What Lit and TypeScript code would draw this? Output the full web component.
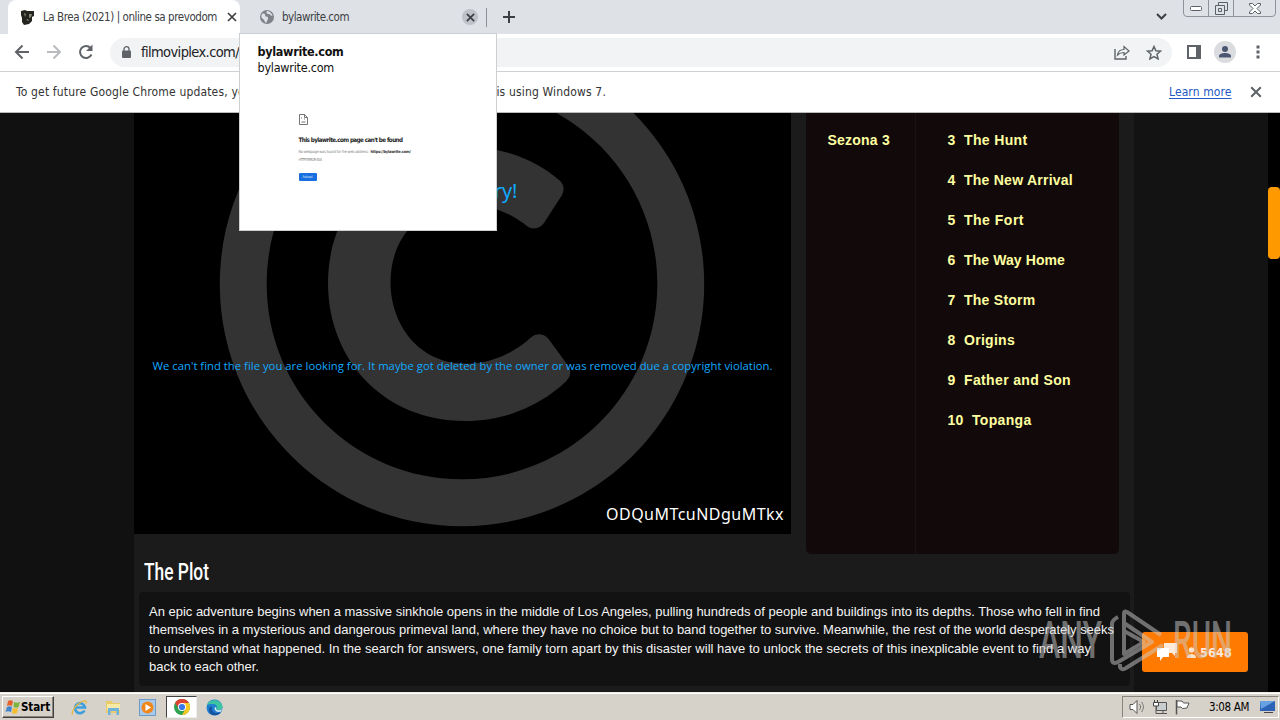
import { LitElement, html, css, svg } from "lit";
import { customElement, property } from "lit/decorators.js";

/** A single line of text that is spread or squeezed to a given width. */
@customElement("fit-text")
class FitText extends LitElement {
  @property({ type: Number }) w = 0;
  @property({ type: Boolean }) squeeze = false;
  static styles = css`
    :host { display: block; flex: none; white-space: pre; }
    .t { display: inline-block; transform-origin: 0 50%; white-space: pre; }
  `;
  render() {
    return html`<span class="t"><slot></slot></span>`;
  }
  async firstUpdated() {
    await document.fonts.ready;
    const el = this.renderRoot.querySelector(".t") as HTMLElement;
    const natural = el.getBoundingClientRect().width;
    const n = (this.textContent || "").length;
    this.style.width = this.w + "px";
    if (this.squeeze) el.style.transform = `scaleX(${this.w / natural})`;
    else el.style.letterSpacing = (this.w - natural) / n + "px";
  }
}

const cross = (size: number, color: string, sw: number) => html`<svg width=${size} height=${size} viewBox="0 0 10 10">
  <path d="M1 1L9 9M9 1L1 9" stroke=${color} stroke-width=${sw} fill="none" /></svg>`;

const copyright = svg`<path fill="#333" d="M256 8C119.033 8 8 119.033 8 256s111.033 248 248 248 248-111.033 248-248S392.967 8 256 8zm0 448c-110.532 0-200-89.451-200-200 0-110.531 89.451-200 200-200 110.532 0 200 89.451 200 200 0 110.532-89.451 200-200 200zm107.351-101.064c-9.614 9.712-45.53 41.396-104.065 41.396-82.43 0-140.484-61.425-140.484-141.567 0-79.152 60.275-139.401 139.762-139.401 55.531 0 88.738 26.62 97.593 34.779a11.965 11.965 0 0 1 1.936 15.322l-18.155 28.113c-3.841 5.95-11.966 7.282-17.499 2.921-8.595-6.776-31.814-22.538-61.708-22.538-48.303 0-77.916 35.33-77.916 80.082 0 41.589 26.888 83.692 78.277 83.692 32.657 0 56.843-19.039 65.726-27.225 5.27-4.857 13.596-4.039 17.82 1.738l19.865 27.17a11.947 11.947 0 0 1-1.152 15.517z"/>`;

const episodes: [string, string, number, number][] = [
  ["3", "The Hunt", 8, 63.5],
  ["4", "The New Arrival", 8, 109],
  ["5", "The Fort", 8, 60],
  ["6", "The Way Home", 8, 101],
  ["7", "The Storm", 8, 71.5],
  ["8", "Origins", 8, 51],
  ["9", "Father and Son", 8, 107],
  ["10", "Topanga", 16, 59.5],
];

const plot: [string, number][] = [
  ["An epic adventure begins when a massive sinkhole opens in the middle of Los Angeles, pulling hundreds of people and buildings into its depths. Those who fell in find", 951],
  ["themselves in a mysterious and dangerous primeval land, where they have no choice but to band together to survive. Meanwhile, the rest of the world desperately seeks", 965],
  ["to understand what happened. In the search for answers, one family torn apart by this disaster will have to unlock the secrets of this inexplicable event to find a way", 942],
  ["back to each other.", 110],
];

@customElement("app-root")
class AppRoot extends LitElement {
  static styles = css`
    :host { display: flex; flex-direction: column; width: 1280px; height: 720px; overflow: hidden; position: relative;
      font-family: "DejaVu Sans", sans-serif; font-stretch: condensed; font-size: 12px; color: #3c4043; background: #fff; }
    * { box-sizing: border-box; }
    svg { display: block; flex: none; }

    .strip { height: 34px; flex: none; background: #dee1e6; display: flex; padding-left: 8px; }
    .tab { width: 232px; height: 34px; background: #fff; border-radius: 8px 8px 0 0; display: flex; align-items: center; padding-left: 13px; flex: none; }
    .tab .label { margin: 0 10px 0 8px; }
    .label { font-size: 11.5px; }
    .idle { width: 230px; display: flex; align-items: center; padding-left: 20px; flex: none; }
    .idle .label { margin: 0 113px 0 8px; }
    .closer { width: 16px; height: 16px; border-radius: 50%; background: #bfc2c9; display: grid; place-items: center; flex: none; }
    .sep { width: 1px; height: 19px; background: #8b8e94; margin: 8px 16px 0 16px; }
    .plus { margin-top: 11px; }
    .chev { margin: 13px 0 0 641px; }
    .wins { margin: -2px 0 0 16px; width: 93px; height: 19px; border: 1px solid #8f949c; border-radius: 0 0 4px 4px; display: flex; flex: none; }
    .wins span { display: grid; place-items: center; width: 25px; border-right: 1px solid #8f949c; padding-top: 2px; }
    .wins span:last-child { width: 41px; border: 0; }

    .toolbar { height: 38px; flex: none; background: #fff; border-bottom: 1px solid #cfd2d5; display: flex; align-items: center; padding: 0 0 1px 14px; }
    .toolbar .nav { margin-right: 16px; }
    .omni { width: 1062px; height: 29px; border-radius: 15px; background: #f1f3f4; display: flex; align-items: center; padding-left: 12px; font-size: 14.5px; color: #202124; }
    .omni .url { margin: 0 875px 0 10px; }
    .omni .share { margin-right: 16px; }
    .side { margin: 0 12px 0 15px; }
    .avatar { width: 22px; height: 22px; border-radius: 50%; background: #dadce0; margin: 0 20px 0 1px; display: grid; place-items: center; flex: none; }

    .info { height: 41px; flex: none; display: flex; align-items: center; padding: 0 0 0 16px; border-bottom: 1px solid #bbb; font-size: 12px; color: #333; }
    .info .more { margin: 0 18px 0 563px; color: #2259c4; }
    .more span { text-decoration: underline; text-underline-offset: 2px; }

    .page { height: 579px; flex: none; display: flex; background: #131313; overflow: hidden; }
    .gutter { width: 134px; flex: none; background: #111; }
    .main { width: 1000px; flex: none; background: #1b1b1b; }
    .top { display: flex; align-items: flex-start; gap: 15px; height: 441px; }
    .video { width: 657px; height: 421px; background: #000; position: relative; overflow: hidden; color: #11a9ff; font-family: "Open Sans", sans-serif; font-stretch: normal; display: flex; flex-direction: column; }
    .video svg { position: absolute; left: 78px; top: -79px; }
    .video fit-text { position: relative; }
    .sorry { margin: 64px 0 0 274px; font-size: 20px; line-height: 28px; font-family: "Noto Sans"; }
    .lost { margin: 151px 0 0 18.5px; font-size: 11.3px; line-height: 20px; font-weight: 500; }
    .code { margin: 125px 0 0 472px; color: #fff; font-size: 16px; line-height: 26px; font-family: "Noto Sans"; }
    .panel { width: 313px; height: 441px; background: #120a0a; border-radius: 0 0 5px 5px; display: flex; font: bold 14px/40px "Liberation Sans", sans-serif; color: #ffffa0; padding-top: 7px; }
    .season { width: 110px; margin-top: -7px; padding: 7px 0 0 21.5px; border-right: 1px solid #1a1111; }
    .eps { padding-left: 31.5px; }
    .ep { display: flex; gap: 8.5px; height: 40px; }
    .head { height: 38px; padding: 0 0 0 9.5px; font: 500 24px/37px Roboto, sans-serif; color: #fff; }
    .plot { width: 991px; height: 94px; margin-left: 5px; background: #121212; border-radius: 4px; padding: 11px 0 0 10px; font: 13px/18.4px "Liberation Sans", sans-serif; color: #f4f4f4; }
    .plot fit-text { height: 18.4px; }
    .rail { margin-left: auto; width: 12px; background: #000; padding-top: 74px; }
    .thumb { height: 72px; border-radius: 4px; background: #ff9900; }

    .card { position: absolute; left: 239px; top: 33px; width: 258px; height: 198px; background: #fff; border: 1px solid #cdd0d3; padding: 10px 0 0 17.5px; font-size: 12.5px; color: #111; }
    .card .b { font-weight: bold; line-height: 16px; }
    .card .u { line-height: 16px; }
    .err { padding: 38px 0 0 41px; font-size: 4px; color: #888; }
    .err .h { margin: 11px 0 5px; font-weight: bold; font-size: 6.2px; line-height: 8px; color: #222; }
    .err .r { display: flex; line-height: 5px; gap: 2px; margin-bottom: 3px; }
    .err .r .d { color: #333; font-weight: bold; }
    .err .btn { margin-top: 11px; width: 18px; height: 8px; background: #1a6fe0; border-radius: 1px; color: #cfe1fa; padding-left: 4px; font-size: 3.5px; line-height: 8px; }

    .chat { position: absolute; left: 1142px; top: 632px; width: 106px; height: 40px; border-radius: 3px; background: #ff7a00; display: flex; align-items: center; padding-left: 15px; color: #fff; }
    .chat .ppl { margin: 0 4px 0 10px; }
    .chat .n { font-size: 12.5px; font-weight: bold; opacity: .85; }
    .mark { position: absolute; left: 1039px; top: 609px; display: flex; align-items: center; gap: 8px; height: 64px; opacity: .5; font: 500 52px/62px Roboto, sans-serif; color: #ccc; }

    .bar { height: 28px; flex: none; background: #d6d1c9; border-top: 1px solid #efece6; box-shadow: inset 0 1px #fff; display: flex; padding: 3px 1px 0 2px; }
    .start { width: 52px; height: 22px; border: 1px solid; border-color: #fff #404040 #404040 #fff; box-shadow: inset -1px -1px #8a857c; display: flex; align-items: center; padding-left: 2px; font-weight: bold; font-size: 11.5px; color: #000; }
    .quick { display: flex; align-items: center; height: 22px; margin-left: 17px; }
    .quick svg { margin-right: 17px; }
    .on { width: 31px; height: 22px; margin: 0 9px 0 -7px; background: #fff; border: 1px solid; border-color: #404040 #eee #eee #404040; display: grid; place-items: center; }
    .quick .on svg { margin: 0; }
    .tray { margin-left: auto; width: 157px; height: 22px; border: 1px solid; border-color: #8a857c #fff #fff #8a857c; display: flex; align-items: center; padding-left: 6px; color: #000; font-size: 11.5px; }
    .tray .net { margin-right: 1px; }
    .tray .clock { margin: 0 11px 0 19px; }
  `;

  render() {
    return html`
      <div class="strip">
        <div class="tab">
          <svg width="14" height="16" viewBox="0 0 14 16"><path d="M0 2l4-1 2 1 7 0v5l-2 1v4l-3 3-5 1-2-3 0-4-1-3z" fill="#23241f"/><path d="M3 4l2 1-1 3zM8 5h3l-1 3-2 1zM5 11l2-1 1 2" fill="#8a8b78"/></svg>
          <fit-text class="label" w="174">La Brea (2021) | online sa prevodom</fit-text>
          ${cross(10, "#3c4043", 1.7)}
        </div>
        <div class="idle">
          <svg width="14" height="14" viewBox="0 0 14 14"><circle cx="7" cy="7" r="7" fill="#7f8388"/><path d="M2 4c2-1 4 0 3 2 1 1 3 0 3 2s-1 3-2 5c-2-1-1-3-3-4S1 6 2 4zM7 1c2 0 5 2 5.500 5-2 0-2-2-4-2S6 2 7 1z" fill="#dee1e6"/></svg>
          <fit-text class="label" w="67">bylawrite.com</fit-text>
          <span class="closer">${cross(9, "#3c4043", 1.9)}</span>
        </div>
        <div class="sep"></div>
        <svg class="plus" width="12" height="12" viewBox="0 0 12 12"><path d="M6 0v12M0 6h12" stroke="#3c4043" stroke-width="2"/></svg>
        <svg class="chev" width="11" height="8" viewBox="0 0 11 8"><path d="M1 1l4.500 4.500L10 1" fill="none" stroke="#3c4043" stroke-width="2"/></svg>
        <div class="wins">
          <span><svg width="12" height="5" viewBox="0 0 12 5"><rect x=".5" y=".5" width="11" height="4" rx="1" fill="#fff" stroke="#5b5f66"/></svg></span>
          <span><svg width="13" height="13" viewBox="0 0 13 13"><path d="M3.500 3.500v-3h9v8h-3M.5 3.500h9v9h-9zM3.500 6.500h3v3h-3z" fill="none" stroke="#5b5f66"/></svg></span>
          <span><svg width="12" height="11" viewBox="0 0 12 11"><path d="M.5.5h3L6 3 8.500.5h3v1.500L8 5.500l3.500 3.500v1.500h-3L6 8l-2.500 2.500h-3V9L4 5.500.5 2z" fill="#fff" stroke="#5b5f66"/></svg></span>
        </div>
      </div>

      <div class="toolbar">
        <svg class="nav" width="16" height="16" viewBox="0 0 16 16"><path d="M15 8H2.500M8.500 1.500L2 8l6.500 6.500" fill="none" stroke="#5f6368" stroke-width="2"/></svg>
        <svg class="nav" width="16" height="16" viewBox="0 0 16 16"><path d="M1 8h12.500M7.500 1.500L14 8l-6.500 6.500" fill="none" stroke="#b9bbbe" stroke-width="2"/></svg>
        <svg class="nav" width="16" height="16" viewBox="0 0 16 16"><path d="M13.500 10.500A6 6 0 1 1 12.500 4" fill="none" stroke="#5f6368" stroke-width="2"/><path d="M14.500.5v6.500H8z" fill="#5f6368"/></svg>
        <div class="omni">
          <svg width="9" height="12" viewBox="0 0 9 12"><rect y="4.500" width="9" height="7.500" rx="1" fill="#5f6368"/><path d="M2 5V3a2.500 2.300 0 0 1 5 0v2" fill="none" stroke="#5f6368" stroke-width="1.300"/></svg>
          <fit-text class="url" w="98">filmoviplex.com/</fit-text>
          <svg class="share" width="16" height="15" viewBox="0 0 16 15"><path d="M1 4v10h11v-3" fill="none" stroke="#5f6368" stroke-width="1.400"/><path d="M3.500 10C4 6.500 6.500 4.500 10 4.500V1.500L15 6l-5 4V7.500C7.500 7.500 5.500 8 3.500 10z" fill="none" stroke="#5f6368" stroke-width="1.200"/></svg>
          <svg width="16" height="15" viewBox="0 0 16 15"><path d="M8 1.500l1.900 4.300 4.600.4-3.500 3.100 1.100 4.600L8 11.500l-4.100 2.400L5 9.300 1.500 6.200l4.600-.4z" fill="none" stroke="#5f6368" stroke-width="1.500"/></svg>
        </div>
        <svg class="side" width="14" height="14" viewBox="0 0 14 14"><path d="M1 1h12v12H1z" fill="none" stroke="#5f6368" stroke-width="2"/><path d="M9 1h5v12H9z" fill="#5f6368"/></svg>
        <span class="avatar"><svg width="12" height="12" viewBox="0 0 12 12"><circle cx="6" cy="3" r="3" fill="#4a5672"/><path d="M0 11.500V10c0-2 3-3 6-3s6 1 6 3v1.500z" fill="#4a5672"/></svg></span>
        <svg width="4" height="14" viewBox="0 0 4 14"><path d="M.5.500h3v3h-3zM.5 5.500h3v3h-3zM.5 10.500h3v3h-3z" fill="#5f6368"/></svg>
      </div>

      <div class="info">
        <fit-text w="590">To get future Google Chrome updates, you'll need Windows 10 or later. This computer is using Windows 7.</fit-text>
        <fit-text class="more" w="62.500"><span>Learn more</span></fit-text>
        ${cross(12, "#5f6368", 1.7)}
      </div>

      <div class="page">
        <div class="gutter"></div>
        <div class="main">
          <div class="top">
            <div class="video">
              <svg width="500" height="500" viewBox="0 0 512 512">${copyright}</svg>
              <fit-text class="sorry" w="109">We're Sorry!</fit-text>
              <fit-text class="lost" w="620">We can't find the file you are looking for. It maybe got deleted by the owner or was removed due a copyright violation.</fit-text>
              <fit-text class="code" w="178">ODQuMTcuNDguMTkx</fit-text>
            </div>
            <div class="panel">
              <div class="season"><fit-text w="62.500">Sezona 3</fit-text></div>
              <div class="eps">
                ${episodes.map(([n, t, a, b]) => html`<div class="ep"><fit-text w=${a}>${n}</fit-text><fit-text w=${b}>${t}</fit-text></div>`)}
              </div>
            </div>
          </div>
          <div class="head"><fit-text squeeze w="65">The Plot</fit-text></div>
          <div class="plot">${plot.map(([t, w]) => html`<fit-text w=${w}>${t}</fit-text>`)}</div>
        </div>
        <div class="rail"><div class="thumb"></div></div>
      </div>

      <div class="bar">
        <div class="start">
          <svg width="16" height="16" viewBox="0 0 16 16"><path d="M3 2c2-1 3-1 5 0L7 7c-2-1-3-1-5 0z" fill="#e5602a"/><path d="M9 3c2 1 4 1 6 0l-1.500 5c-2 1-3 1-5 0z" fill="#7db53c"/><path d="M2 8c2-1 3-1 5 0l-1 5c-2-1-4-1-5.500 0z" fill="#3f86cf"/><path d="M8 9c2 1 3 1 5 0l-1 5c-2 1-3 1-5 0z" fill="#f5bd2c"/></svg>
          <fit-text w="29">Start</fit-text>
        </div>
        <div class="quick">
          <svg width="17" height="17" viewBox="0 0 17 17"><path d="M13.500 11.500A5 5 0 1 1 14 8.500H5" fill="none" stroke="#3e9fdd" stroke-width="2.600"/><path d="M1.500 15.500C0 13 5 5 11 2.500c3-1.300 5-.5 4 2" fill="none" stroke="#e8b93a" stroke-width="1.300"/></svg>
          <svg width="17" height="17" viewBox="0 0 17 17"><path d="M1 2h6l1 2h7v10H1z" fill="#e9cc68"/><path d="M2 5h13v6H2z" fill="#f7e9a6"/><path d="M3 9h11v7h-2.500v-4h-6v4H3z" fill="#6fb2dd"/></svg>
          <svg width="17" height="17" viewBox="0 0 17 17"><rect x=".5" y=".5" width="16" height="16" fill="#a9c9e8" stroke="#6c9bc9"/><circle cx="8.500" cy="8.500" r="6" fill="#f0871c"/><path d="M6.500 5v7l5.500-3.500z" fill="#fff"/></svg>
          <span class="on"><svg width="16" height="16" viewBox="0 0 16 16"><circle cx="8" cy="8" r="8" fill="#2ea04f"/><path d="M1.070 4A8 8 0 0 1 14.930 4H8L5 9.700z" fill="#df4334"/><path d="M14.930 4A8 8 0 0 1 8 16l3.500-6L8 4z" fill="#f9c923"/><circle cx="8" cy="8" r="4" fill="#fff"/><circle cx="8" cy="8" r="3.100" fill="#3a77e8"/></svg></span>
          <svg width="17" height="17" viewBox="0 0 17 17"><circle cx="8.500" cy="8.500" r="8" fill="#1e7fd0"/><path d="M1 6C3 0 14-1 16.500 7c.4 4-4 5-6.500 3 2-3 0-5-3-5-2.500 0-5 0-6 1z" fill="#3cc5a0"/><path d="M6 8c-1 4 3 8 9 5-3 5-11 4-12-1C2.500 9 4 7 6 8z" fill="#17539f"/><path d="M9 8c1 0 1.500 1 1 2 1 1.500 4 2 6 0l-1 2.500C11 14 7.500 11 9 8z" fill="#d8eef4"/></svg>
        </div>
        <div class="tray">
          <svg width="18" height="16" viewBox="0 0 18 16"><path d="M1 5.500h3l4-4v13l-4-4H1z" fill="#fff" stroke="#555"/><path d="M10.500 5c1.500 2 1.500 4 0 6M12.500 3c2.500 3 2.500 7 0 10" fill="none" stroke="#777"/></svg>
          <svg class="net" width="24" height="16" viewBox="-4 0 24 16"><path d="M5.500 3.500h10v8h-10z" fill="#c9cdd0" stroke="#555"/><path d="M7 14.500h9M12 12v2M5 6v8.500h5" stroke="#555" fill="none"/><path d="M2.500 3.500h5V7h-5zM3.500 1v2M6.500 1v2" fill="#fff" stroke="#444"/></svg>
          <svg width="18" height="16" viewBox="-2 0 18 16"><path d="M2.500 1v14.500" stroke="#555" stroke-width="1.500"/><path d="M3 2h5l1.500 2H15l-2 5-4.500.5L7 8H3z" fill="#fff" stroke="#555"/></svg>
          <fit-text class="clock" w="40">3:08 AM</fit-text>
          <svg width="15" height="14" viewBox="0 0 15 14"><path d="M0 1h15v10H0z" fill="#2b62b5"/><path d="M0 1h15L1 9z" fill="#66a2e2"/><path d="M4 12.500h9" stroke="#444"/></svg>
        </div>
      </div>

      <div class="card">
        <fit-text class="b" w="86">bylawrite.com</fit-text>
        <fit-text class="u" w="76.500">bylawrite.com</fit-text>
        <div class="err">
          <svg width="9" height="11" viewBox="0 0 9 11"><path d="M.5.500h5l3 3v7h-8zM5.500.500v3h3M2 4h1M5 5h1M2.500 8h4" fill="none" stroke="#666" stroke-width=".9"/></svg>
          <fit-text class="h" w="104">This bylawrite.com page can't be found</fit-text>
          <div class="r"><fit-text w="70">No webpage was found for the web address:</fit-text><fit-text class="d" w="40">https://bylawrite.com/</fit-text></div>
          <div class="r"><fit-text w="23">HTTP ERROR 404</fit-text></div>
          <div class="btn"><fit-text w="10">Reload</fit-text></div>
        </div>
      </div>

      <div class="chat">
        <svg width="20" height="18" viewBox="0 0 20 18"><path d="M7 0h13v10h-2v3l-3-3H7z" fill="#fff" opacity=".85"/><path d="M0 5h12v9H6l-3 4v-4H0z" fill="#fff"/></svg>
        <svg class="ppl" width="9" height="11" viewBox="0 0 9 11"><circle cx="4.500" cy="3" r="2.700" fill="#ffe3cb"/><path d="M0 11c0-3 2-4 4.500-4S9 8 9 11z" fill="#ffe3cb"/></svg>
        <fit-text class="n" w="32">5648</fit-text>
      </div>
      <div class="mark">
        <fit-text squeeze w="63">ANY</fit-text>
        <svg width="55" height="64" viewBox="0 0 55 64"><g fill="none" stroke="#ccc" stroke-linejoin="round" stroke-width="4"><path d="M14 36V4.500q0-3 3-1.500L51 26"/><path d="M8 8q-6 3-6 7v35q0 6 6 3l34-20L14 14"/><path d="M14 25v20L34 33 14 22"/><path d="M10 55v3q2 4 6 1L53 36"/></g></svg>
        <fit-text squeeze w="59">RUN</fit-text>
      </div>
    `;
  }
}
